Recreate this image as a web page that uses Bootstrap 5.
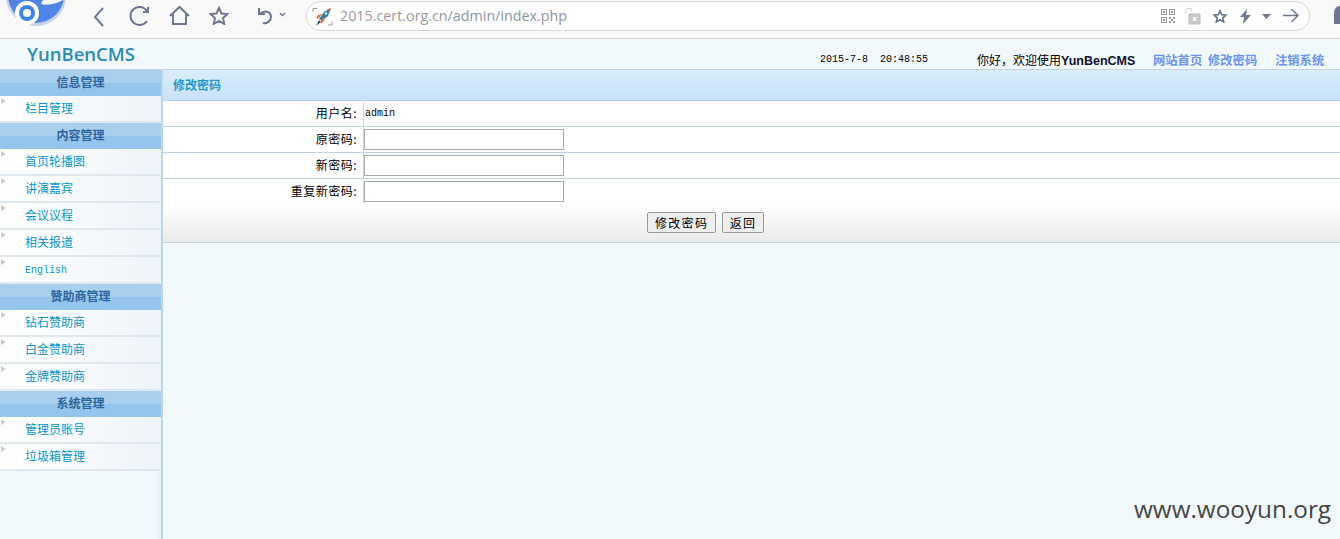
<!DOCTYPE html>
<html lang="zh">
<head>
<meta charset="utf-8">
<title>YunBenCMS</title>
<link href="https://cdn.jsdelivr.net/npm/bootstrap@5.3.0/dist/css/bootstrap.min.css" rel="stylesheet">
<style>
html,body{height:539px;overflow:hidden}
body{background:#f2f9fd;font-family:"Noto Sans CJK SC",sans-serif;font-size:12px;color:#000;position:relative}
.chrome-bar{height:39px;background:#f9f9f9;border-bottom:1px solid #d2d2d2;position:relative;overflow:hidden}
.chrome-logo{position:absolute;left:5px;top:0}
.chrome-ico{position:absolute}
.addr-box{position:absolute;left:306px;top:1px;width:1004px;height:30px;background:#fff;border:1px solid #d8d8d8;border-radius:15px}
.addr-text{position:absolute;left:33px;top:4px;font-family:"Open Sans",sans-serif;font-size:14.3px;line-height:19px;color:#9a9a9a}
.addr-text b{font-weight:400;color:#8a93a3}
.top-head{height:31px;border-bottom:1px solid #c5d3e3;background:#f2f9fd}
.brand-name{width:160px;padding-left:27px;font-family:"Open Sans",sans-serif;font-size:18.5px;font-weight:600;line-height:29px;color:#2a8ab5}
.head-date{font-family:"Liberation Mono",monospace;font-size:10px;line-height:12px;position:absolute;left:820px;top:54px;white-space:pre}
.head-welcome{position:absolute;left:977px;top:51px;line-height:18px}
.head-welcome b{font-family:"Liberation Sans",sans-serif;font-size:12.5px;color:#101030}
.head-link{position:absolute;top:51px;line-height:18px;font-size:12.3px;font-weight:700;color:#6b93f5;text-decoration:none}
.main-wrap{height:469px}
.side-col{width:163px;flex:none;background:linear-gradient(90deg,#f2f9fd 157px,#e8f3fa 157px);border-right:2px solid #bfd6e6}
.side-title{height:26px;line-height:24px;text-align:center;font-weight:700;font-size:12px;color:#2b649c;background:linear-gradient(#a9cfef 0,#a9cfef 50%,#95c4ec 50%,#95c4ec 100%)}
.side-item{height:27px;line-height:24px;padding-left:25px;color:#0a95c9;font-size:12px;background:linear-gradient(90deg,#fff,#eef4f9);border-bottom:2px solid #dfe8ee;position:relative;margin-right:1px;text-decoration:none;display:block}
.side-item::before{content:"";position:absolute;left:1px;top:2px;border-left:5px solid #ccc;border-top:3px solid transparent;border-bottom:3px solid transparent}
.side-en{font-family:"Liberation Mono",monospace;font-size:10px;line-height:27px}
.panel-col{flex:1;min-width:0}
.panel-title{height:31px;line-height:30px;padding-left:10px;font-weight:700;font-size:12px;color:#1d9ad0;background:linear-gradient(#d9edfb,#c6e2f8);border-bottom:1px solid #bcd0e8}
.form-row-x{height:26px;border-bottom:1px solid #c0d0e0;background:#fff}
.form-row-x:nth-child(4){border-bottom:0;padding-bottom:1px}
.form-label-x{width:201px;flex:none;padding-right:6px;text-align:right;line-height:24px;font-size:12px;letter-spacing:.5px;border-right:1px solid #c9d8e8}
.form-value-x{display:flex;align-items:center}
.value-mono{font-family:"Liberation Mono",monospace;font-size:10px;padding-left:1px}
.field-x{width:200px;height:21px;background:#fff;border:1px solid #a9a9a9;padding:0;display:block}
.form-foot{height:38px;background:linear-gradient(#fff,#eaeaea);border-bottom:1px solid #c0d0e0;padding-top:7px;padding-left:484px;column-gap:5.500px}
.btn-x{height:21px;padding:0 7px;font-size:12px;line-height:19px;letter-spacing:1.300px;background:#efefef;border:1px solid #9a9a9a;border-radius:2px;color:#000}
.water{position:absolute;left:1134px;top:493px;font-family:"Open Sans",sans-serif;font-size:24.300px;line-height:32px;color:#454545}
</style>
</head>
<body>
<div class="chrome-bar">
  <svg class="chrome-logo" width="62" height="27" viewBox="0 0 62 27">
    <circle cx="31" cy="-4" r="30" fill="#c9d3e6"/>
    <circle cx="31" cy="-5" r="28" fill="#4f86e6"/>
    <path d="M36 4C44 6 52 3 58 0L38 0Z" fill="#fff"/>
    <circle cx="22" cy="13" r="12" fill="#fff"/>
    <circle cx="22" cy="13" r="8" fill="#3f83e0"/>
    <circle cx="22" cy="13" r="4" fill="#fff"/>
  </svg>
  <svg class="chrome-ico" style="left:92px;top:6px" width="14" height="22" viewBox="0 0 14 22" fill="none" stroke="#6d7890" stroke-width="2"><path d="M11 2 3 11l8 9"/></svg>
  <svg class="chrome-ico" style="left:128px;top:5px" width="24" height="22" viewBox="0 0 24 22" fill="none" stroke="#6d7890" stroke-width="2"><path d="M19 16a9 9 0 1 1 0-10"/><path d="M20 2v5h-5" /></svg>
  <svg class="chrome-ico" style="left:169px;top:5px" width="21" height="21" viewBox="0 0 21 21" fill="none" stroke="#6d7890" stroke-width="2"><path d="M1 11 10.500 2 20 11M4 9v10h13V9"/></svg>
  <svg class="chrome-ico" style="left:209px;top:6px" width="20" height="19" viewBox="0 0 20 19" fill="none" stroke="#6d7890" stroke-width="2"><path d="m10 2 2.500 5.500 6 .6-4.500 4 1.300 5.900L10 15l-5.300 3 1.300-5.900-4.500-4 6-.6z"/></svg>
  <svg class="chrome-ico" style="left:257px;top:6px" width="32" height="20" viewBox="0 0 32 20" fill="none" stroke="#6d7890" stroke-width="2"><path d="M2 2v6h6M3 8c4-4 11-3 11 3 0 4-4 7-8 6"/><path d="m23 7 2.500 2.500L28 7" stroke-width="1.500"/></svg>
  <div class="addr-box">
    <svg class="chrome-ico" style="left:3px;top:5px" width="25" height="20" viewBox="0 0 25 20" fill="none">
      <path d="M3 5V1.500h4M22 14.500V18h-4" stroke="#999"/>
      <path d="M9 12 14 5l7-4-3 8-6 5z" fill="#2f7f9f"/>
      <path d="M17.500 2.500 21 1l-1.500 3.500z" fill="#e8552a"/>
      <path d="M8 8l4-1-3 4-3 1zM15 10l-1 4-3 3 0-4z" fill="#e8702a"/>
      <path d="M9 13l2 2-5 4z" fill="#35504a"/>
      <circle cx="16" cy="6.500" r="1.300" fill="#cfe6ef"/>
    </svg>
    <div class="addr-text">2015.cert.org.cn<b>/admin/index.php</b></div>
    <svg class="chrome-ico" style="left:854px;top:7px" width="14" height="14" viewBox="0 0 14 14" fill="#999"><path d="M0 0h6v6H0zM1 1v4h4V1zM8 0h6v6H8zM9 1v4h4V1zM0 8h6v6H0zM1 9v4h4V9zM8 8h2v2H8zM12 8h2v2h-2zM10 10h2v2h-2zM8 12h2v2H8zM12 12h2v2h-2zM2 2h2v2H2zM10 2h2v2h-2zM2 10h2v2H2z"/></svg>
    <svg class="chrome-ico" style="left:878px;top:6px" width="16" height="17" viewBox="0 0 16 17" fill="none"><path d="M1 6V3a3 3 0 0 1 6 0" stroke="#ccc"/><rect x="4" y="6" width="11" height="10" fill="#ccc" stroke="#bbb"/><rect x="8" y="9" width="3" height="4" fill="#fff"/></svg>
    <svg class="chrome-ico" style="left:906px;top:7px" width="14" height="14" viewBox="0 0 20 19" fill="none" stroke="#6d7890" stroke-width="2.500"><path d="m10 2 2.500 5.500 6 .6-4.500 4 1.300 5.900L10 15l-5.300 3 1.300-5.900-4.500-4 6-.6z"/></svg>
    <svg class="chrome-ico" style="left:933px;top:7px" width="11" height="15" viewBox="0 0 11 15" fill="#6d7890"><path d="M7 0 0 8h4l-1 7 8-9H6z"/></svg>
    <svg class="chrome-ico" style="left:955px;top:12px" width="9" height="5" viewBox="0 0 9 5" fill="#6d7890"><path d="M0 0h9L4.500 5z"/></svg>
    <svg class="chrome-ico" style="left:976px;top:6px" width="16" height="15" viewBox="0 0 16 15" fill="none" stroke="#6d7890" stroke-width="1.500"><path d="M0 7.500h15M8.500 1l6.500 6.500L8.500 14"/></svg>
  </div>
  <svg class="chrome-ico" style="left:1334px;top:6px" width="6" height="18" viewBox="0 0 6 18" fill="#6d7890"><path d="M6 0C2 0 0 3 0 8v10h6z"/></svg>
</div>

<div class="top-head d-flex"><div class="brand-name">YunBenCMS</div></div>
<div class="head-date">2015-7-8  20:48:55</div>
<div class="head-welcome">你好，欢迎使用<b>YunBenCMS</b></div>
<a class="head-link" style="left:1153px" href="#">网站首页</a>
<a class="head-link" style="left:1208px" href="#">修改密码</a>
<a class="head-link" style="left:1275px" href="#">注销系统</a>

<div class="main-wrap d-flex">
  <nav class="side-col">
    <div class="side-title">信息管理</div>
    <a class="side-item" href="#">栏目管理</a>
    <div class="side-title">内容管理</div>
    <a class="side-item" href="#">首页轮播图</a>
    <a class="side-item" href="#">讲演嘉宾</a>
    <a class="side-item" href="#">会议议程</a>
    <a class="side-item" href="#">相关报道</a>
    <a class="side-item side-en" href="#">English</a>
    <div class="side-title">赞助商管理</div>
    <a class="side-item" href="#">钻石赞助商</a>
    <a class="side-item" href="#">白金赞助商</a>
    <a class="side-item" href="#">金牌赞助商</a>
    <div class="side-title">系统管理</div>
    <a class="side-item" href="#">管理员账号</a>
    <a class="side-item" href="#">垃圾箱管理</a>
  </nav>
  <main class="panel-col">
    <div class="panel-title">修改密码</div>
    <form>
      <div class="form-row-x d-flex"><div class="form-label-x">用户名:</div><div class="form-value-x value-mono">admin</div></div>
      <div class="form-row-x d-flex"><div class="form-label-x">原密码:</div><div class="form-value-x"><input class="field-x" type="password"></div></div>
      <div class="form-row-x d-flex"><div class="form-label-x">新密码:</div><div class="form-value-x"><input class="field-x" type="password"></div></div>
      <div class="form-row-x d-flex"><div class="form-label-x">重复新密码:</div><div class="form-value-x"><input class="field-x" type="password"></div></div>
      <div class="form-foot d-flex align-items-start"><button class="btn-x" type="button">修改密码</button><button class="btn-x" type="button">返回</button></div>
    </form>
  </main>
</div>
<div class="water">www.wooyun.org</div>
<script src="https://cdn.jsdelivr.net/npm/bootstrap@5.3.0/dist/js/bootstrap.bundle.min.js"></script>
</body>
</html>
